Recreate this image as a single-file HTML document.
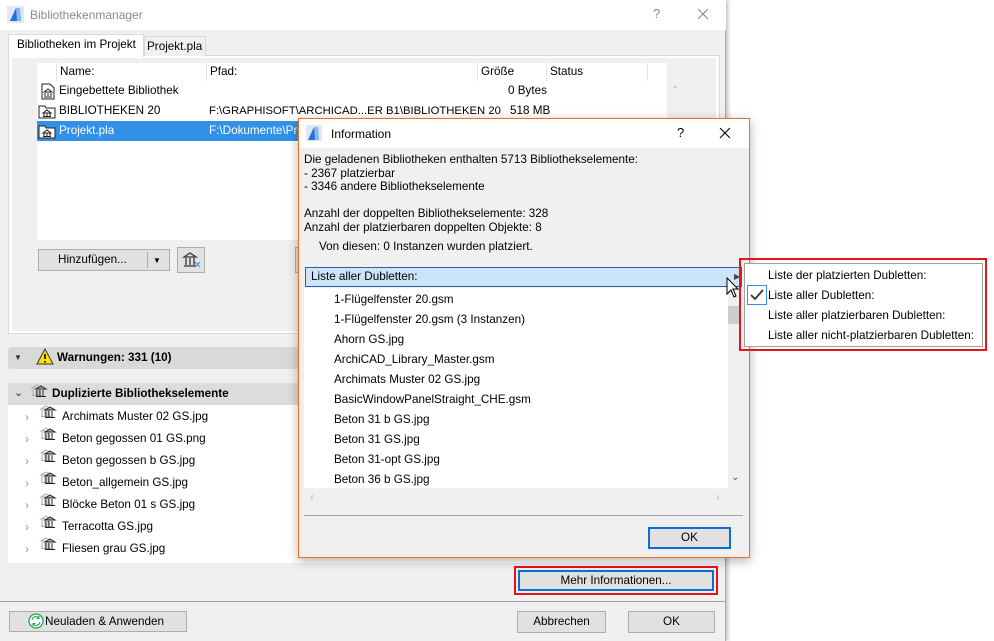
<!DOCTYPE html>
<html><head><meta charset="utf-8"><style>
*{box-sizing:border-box;margin:0;padding:0}
body{width:994px;height:641px;overflow:hidden;background:#fff;font-family:"Liberation Sans",sans-serif;font-size:11.7px;color:#000;position:relative}
.a{position:absolute}
.t{position:absolute;white-space:nowrap;line-height:14px}
.btn{position:absolute;background:#e1e1e1;border:1px solid #adadad;text-align:center;font-size:11.7px}
.hd{border-right:1px solid #e5e5e5;height:18px;line-height:18px;padding-left:3px;position:absolute;top:0}
</style></head><body>
<div class="a" style="left:0;top:0;width:726px;height:641px;background:#f0f0f0;border-right:1px solid #aaa;box-shadow:2px 0 4px rgba(0,0,0,.25)"></div>
<div class="a" style="left:0;top:0;width:726px;height:30px;background:#fff"></div>
<svg class="a" style="left:7px;top:6px" width="17" height="17"><rect width="17" height="17" fill="#dfe9f5"/><path d="M3 15 L9 2 L13 2 L14 15 Z" fill="#2a6ed6"/><path d="M9 2 L13 2 L14 15 L10 15Z" fill="#8fb7ee"/></svg>
<div class="t" style="left:30px;top:8px;color:#8a8a8a;font-size:12px">Bibliothekenmanager</div>
<div class="t" style="left:653px;top:7px;color:#888;font-size:13px">?</div>
<svg class="a" style="left:697px;top:8px" width="12" height="12"><path d="M1 1L11 11M11 1L1 11" stroke="#888" stroke-width="1.1"/></svg>
<div class="a" style="left:8px;top:55px;width:712px;height:279px;border:1px solid #d9d9d9;background:#fff"></div>
<div class="a" style="left:12px;top:58px;width:704px;height:273px;background:#f0f0f0"></div>
<div class="a" style="left:8px;top:34px;width:136px;height:23px;background:#fff;border:1px solid #d9d9d9;border-bottom:none"></div>
<div class="t" style="left:17px;top:38px">Bibliotheken im Projekt</div>
<div class="a" style="left:144px;top:36px;width:62px;height:20px;background:#f0f0f0;border:1px solid #d9d9d9;border-bottom:none"></div>
<div class="t" style="left:147px;top:40px">Projekt.pla</div>
<div class="a" style="left:37px;top:63px;width:630px;height:177px;background:#fff"></div>
<div class="a" style="left:37px;top:63px;width:630px;height:18px">
<div class="hd" style="left:0;width:20px"></div><div class="hd" style="left:20px;width:150px">Name:</div><div class="hd" style="left:170px;width:271px">Pfad:</div><div class="hd" style="left:441px;width:69px">Größe</div><div class="hd" style="left:510px;width:101px">Status</div></div>
<div class="a" style="left:667px;top:81px;width:46px;height:159px;background:#f0f0f0"></div>
<div class="t" style="left:671px;top:84px;color:#bbb;font-size:10px">⌃</div>
<div class="a" style="left:37px;top:121px;width:262px;height:20px;background:#3390e8"></div>
<svg class="a" style="left:40px;top:83px" width="16" height="17"><path d="M2 1H10L14 5V16H2Z" fill="#fff" stroke="#222"/><path d="M4 9l4-3 4 3zM5 10v3M8 10v3M11 10v3M4 14h8" stroke="#222" fill="none"/></svg>
<svg class="a" style="left:38px;top:103px" width="18" height="16"><path d="M1 3H7L8 5H17V15H1Z" fill="#fff" stroke="#222"/><path d="M5 10l4-3 4 3zM6 10v3M9 10v3M12 10v3M5 13.5h8" stroke="#222" fill="none"/></svg>
<svg class="a" style="left:38px;top:123px" width="18" height="16"><path d="M1 3H7L8 5H17V15H1Z" fill="#fff" stroke="#222"/><path d="M5 10l4-3 4 3zM6 10v3M9 10v3M12 10v3M5 13.5h8" stroke="#222" fill="none"/></svg>
<div class="t" style="left:59px;top:84px">Eingebettete Bibliothek</div>
<div class="t" style="left:508px;top:84px">0 Bytes</div>
<div class="t" style="left:59px;top:104px">BIBLIOTHEKEN 20</div>
<div class="t" style="left:209px;top:104px;font-size:11.3px">F:\GRAPHISOFT\ARCHICAD...ER B1\BIBLIOTHEKEN 20</div>
<div class="t" style="left:510px;top:104px">518 MB</div>
<div class="t" style="left:59px;top:124px;color:#fff">Projekt.pla</div>
<div class="t" style="left:209px;top:124px;color:#fff">F:\Dokumente\Pro</div>
<div class="btn" style="left:38px;top:249px;width:132px;height:22px"></div>
<div class="t" style="left:58px;top:253px">Hinzufügen...</div>
<div class="a" style="left:147px;top:252px;width:1px;height:16px;background:#aaa"></div>
<div class="t" style="left:153px;top:254px;font-size:8px">▼</div>
<div class="btn" style="left:177px;top:247px;width:28px;height:26px"></div>
<svg class="a" style="left:182px;top:251px" width="20" height="18"><path d="M2 6l6-4 6 4zM4 7v7M8 7v7M12 7v7M2 15h12" stroke="#333" fill="none" stroke-width="1.3"/><path d="M13 11l5 5M18 11l-5 5" stroke="#3a8ee6"/></svg>
<div class="btn" style="left:295px;top:247px;width:10px;height:26px"></div>
<div class="a" style="left:8px;top:347px;width:716px;height:22px;background:#d9d9d9;border-radius:3px"></div>
<div class="t" style="left:14px;top:351px;font-size:8px;color:#333">▼</div>
<svg class="a" style="left:36px;top:348px" width="18" height="17"><path d="M9 1L17 16H1Z" fill="#ffe000" stroke="#333"/><path d="M9 6v5M9 13v1.5" stroke="#000" stroke-width="1.6"/></svg>
<div class="t" style="left:57px;top:351px;font-weight:bold">Warnungen: 331 (10)</div>
<div class="a" style="left:8px;top:383px;width:716px;height:22px;background:#dcdcdc"></div>
<div class="t" style="left:14px;top:386px;font-size:11px;color:#333">⌄</div>
<div class="t" style="left:52px;top:387px;font-weight:bold">Duplizierte Bibliothekselemente</div>
<div class="a" style="left:8px;top:405px;width:716px;height:158px;background:#fff"></div>
<svg class="a" style="left:0;top:0" width="300" height="641">
<defs><g id="lb"><path d="M2 5l5-3 5 3zM3 6v6M6 6v6M9 6v6M2 12.5h10" stroke="#aaa" fill="none"/><path d="M6 6l5-3 5 3zM7 7v6M10 7v6M13 7v6M6 13.5h10" stroke="#222" fill="none"/></g></defs>
<use href="#lb" x="30" y="383"/>
<use href="#lb" x="39" y="404"/><use href="#lb" x="39" y="426"/><use href="#lb" x="39" y="448"/><use href="#lb" x="39" y="470"/><use href="#lb" x="39" y="492"/><use href="#lb" x="39" y="514"/><use href="#lb" x="39" y="536"/>
</svg>
<div style="position:absolute;left:25px;top:406px;line-height:22px;color:#999;font-size:12px">›<br>›<br>›<br>›<br>›<br>›<br>›</div>
<div style="position:absolute;left:62px;top:406px;line-height:22px;white-space:nowrap">Archimats Muster 02 GS.jpg<br>Beton gegossen 01 GS.png<br>Beton gegossen b GS.jpg<br>Beton_allgemein GS.jpg<br>Blöcke Beton 01 s GS.jpg<br>Terracotta GS.jpg<br>Fliesen grau GS.jpg</div>
<div class="a" style="left:514px;top:566px;width:204px;height:29px;border:2px solid #e8121b"></div>
<div class="btn" style="left:518px;top:570px;width:196px;height:21px;border:2px solid #0a6fd0;line-height:17px">Mehr Informationen...</div>
<div class="a" style="left:0;top:601px;width:726px;height:1px;background:#a0a0a0"></div>
<div class="btn" style="left:9px;top:611px;width:178px;height:21px;line-height:19px">&nbsp;&nbsp;&nbsp;&nbsp;Neuladen &amp; Anwenden</div>
<svg class="a" style="left:28px;top:613px" width="16" height="16"><circle cx="8" cy="8" r="7" fill="#fff" stroke="#1aa64a" stroke-width="1.3"/><path d="M4 7a4 4 0 0 1 7-2M12 9a4 4 0 0 1-7 2" stroke="#1aa64a" fill="none"/><path d="M11 3v2.5H8.5M5 13v-2.5h2.5" stroke="#1aa64a" fill="none"/></svg>
<div class="btn" style="left:517px;top:611px;width:89px;height:22px;line-height:20px">Abbrechen</div>
<div class="btn" style="left:628px;top:611px;width:87px;height:22px;line-height:20px">OK</div>
<div class="a" style="left:298px;top:118px;width:452px;height:440px;background:#f0f0f0;border:1px solid #f07020;box-shadow:0 3px 10px rgba(0,0,0,.3)"></div>
<div class="a" style="left:299px;top:119px;width:450px;height:29px;background:#fff"></div>
<svg class="a" style="left:306px;top:125px" width="16" height="16"><rect width="16" height="16" fill="#dfe9f5"/><path d="M2 15 L8 2 L12 2 L13 15 Z" fill="#2a6ed6"/><path d="M8 2 L12 2 L13 15 L9 15Z" fill="#8fb7ee"/></svg>
<div class="t" style="left:331px;top:127px;font-size:12px">Information</div>
<div class="t" style="left:677px;top:126px;font-size:13px">?</div>
<svg class="a" style="left:719px;top:127px" width="12" height="12"><path d="M1 1L11 11M11 1L1 11" stroke="#000" stroke-width="1.1"/></svg>
<div class="t" style="left:304px;top:153px;line-height:13.5px">Die geladenen Bibliotheken enthalten 5713 Bibliothekselemente:<br>- 2367 platzierbar<br>- 3346 andere Bibliothekselemente<br><br>Anzahl der doppelten Bibliothekselemente: 328<br>Anzahl der platzierbaren doppelten Objekte: 8</div>
<div class="t" style="left:319px;top:240px">Von diesen: 0 Instanzen wurden platziert.</div>
<div class="a" style="left:305px;top:267px;width:437px;height:20px;background:#cce4f7;border:1px solid #2a62a8"></div>
<div class="t" style="left:311px;top:270px">Liste aller Dubletten:</div>
<div class="t" style="left:734px;top:270px;font-size:8px;color:#444">▶</div>
<div class="a" style="left:304px;top:288px;width:424px;height:200px;background:#fff"></div>
<div class="a" style="left:728px;top:288px;width:13px;height:200px;background:#f0f0f0"></div>
<div class="a" style="left:728px;top:306px;width:13px;height:18px;background:#cdcdcd"></div>
<div class="t" style="left:731px;top:471px;font-size:10px;color:#555">⌄</div>
<div style="position:absolute;left:334px;top:290px;line-height:20px;white-space:nowrap">1-Flügelfenster 20.gsm<br>1-Flügelfenster 20.gsm (3 Instanzen)<br>Ahorn GS.jpg<br>ArchiCAD_Library_Master.gsm<br>Archimats Muster 02 GS.jpg<br>BasicWindowPanelStraight_CHE.gsm<br>Beton 31 b GS.jpg<br>Beton 31 GS.jpg<br>Beton 31-opt GS.jpg<br>Beton 36 b GS.jpg</div>
<div class="t" style="left:310px;top:490px;color:#bbb;font-size:12px">‹</div>
<div class="t" style="left:716px;top:490px;color:#bbb;font-size:12px">›</div>
<div class="a" style="left:304px;top:515px;width:439px;height:1px;background:#a0a0a0"></div>
<div class="btn" style="left:648px;top:527px;width:83px;height:22px;border:2px solid #0a6fd0;line-height:18px">OK</div>
<svg class="a" style="left:726px;top:277px" width="14" height="22"><path d="M1 1V17L5 13L8 20L10 19L7 12H12Z" fill="#fff" stroke="#000"/></svg>
<div class="a" style="left:739px;top:258px;width:248px;height:93px;border:2px solid #e8121b"></div>
<div class="a" style="left:744px;top:263px;width:239px;height:84px;background:#fff;border:1px solid #a0a0a0"></div>
<div class="a" style="left:747px;top:285px;width:20px;height:20px;border:1px solid #3d8ee6"></div>
<svg class="a" style="left:749px;top:287px" width="16" height="16"><path d="M2 8l4 4 8-9" stroke="#333" stroke-width="1.8" fill="none"/></svg>
<div style="position:absolute;left:768px;top:266px;line-height:20px;white-space:nowrap">Liste der platzierten Dubletten:<br>Liste aller Dubletten:<br>Liste aller platzierbaren Dubletten:<br>Liste aller nicht-platzierbaren Dubletten:</div>
</body></html>
